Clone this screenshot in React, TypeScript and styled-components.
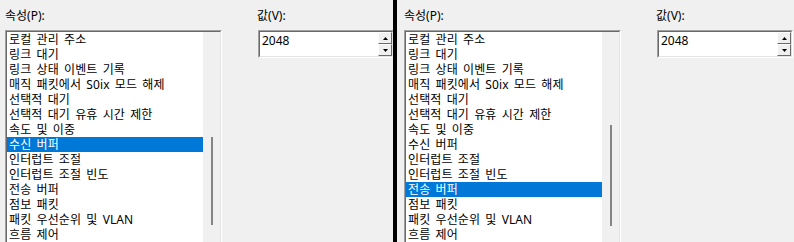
import React, { ReactElement } from 'react';
import styled, { createGlobalStyle } from 'styled-components';

const GlobalStyle = createGlobalStyle`
    html, body {
        margin: 0;
        padding: 0;
        background: #f0f0f0;
        overflow: hidden;
    }
    body {
        font-family: "Noto Sans", "Noto Sans CJK KR", sans-serif;
        font-size: 12px;
        color: #000;
    }
`;

const properties = [
    '로컬 관리 주소',
    '링크 대기',
    '링크 상태 이벤트 기록',
    '매직 패킷에서 S0ix 모드 해제',
    '선택적 대기',
    '선택적 대기 유휴 시간 제한',
    '속도 및 이중',
    '수신 버퍼',
    '인터럽트 조절',
    '인터럽트 조절 빈도',
    '전송 버퍼',
    '점보 패킷',
    '패킷 우선순위 및 VLAN',
    '흐름 제어',
];

const Page = styled.div`
    display: flex;
    width: 794px;
    height: 242px;
    overflow: hidden;
`;

const Divider = styled.div`
    width: 4px;
    flex-shrink: 0;
    background: #000;
`;

interface PanelProps {
    width: number;
    inset: number;
}

const Panel = styled.div<PanelProps>`
    flex-shrink: 0;
    width: ${({ width }) => width}px;
    height: 242px;
    overflow: hidden;
    display: grid;
    grid-template-columns: 217px 136px;
    grid-template-rows: 15px 1fr;
    column-gap: 36px;
    row-gap: 7px;
    padding: 8px 0 0 ${({ inset }) => inset}px;
    box-sizing: border-box;
    background: #f0f0f0;
`;

const Label = styled.div`
    line-height: 15px;
    white-space: nowrap;
`;

const ValueLabel = styled(Label)`
    margin-left: -1px;
`;

// classic sunken 3d border, two pixels deep
const Sunken = styled.div`
    border-style: solid;
    border-width: 1px;
    border-color: #a0a0a0 #fff #fff #a0a0a0;
    box-sizing: border-box;
`;

const SunkenInner = styled.div`
    border-style: solid;
    border-width: 1px;
    border-color: #696969 #e3e3e3 #e3e3e3 #696969;
    box-sizing: border-box;
    height: 100%;
`;

const ListBox = styled(Sunken)`
    height: 240px;
`;

const ListBody = styled(SunkenInner)`
    display: flex;
    background: #fff;
`;

const Items = styled.div`
    flex: 1;
    display: flex;
    flex-direction: column;
    overflow: hidden;
`;

interface ItemProps {
    selected: boolean;
}

const Item = styled.div<ItemProps>`
    height: 15px;
    line-height: 15px;
    padding-left: 2px;
    white-space: nowrap;
    word-spacing: 2px;
    letter-spacing: 0.1px;
    background: ${({ selected }) => (selected ? '#0078d7' : 'transparent')};
    color: ${({ selected }) => (selected ? '#fff' : '#000')};
`;

const Track = styled.div`
    width: 17px;
    flex-shrink: 0;
    display: flex;
    justify-content: center;
    background: #f0f0f0;
`;

const Thumb = styled.div`
    width: 2px;
    margin-left: 1px;
    background: #858585;
`;

const EditBox = styled(Sunken)`
    height: 28px;
    align-self: start;
`;

const EditBody = styled(SunkenInner)`
    display: flex;
    background: #fff;
`;

const EditText = styled.div`
    flex: 1;
    padding: 1px 0 0 2px;
    line-height: 15px;
`;

const Spin = styled.div`
    width: 14px;
    display: flex;
    flex-direction: column;
`;

const SpinButton = styled.div`
    flex: 1;
    display: flex;
    align-items: center;
    justify-content: center;
    background: #f0f0f0;
    border-style: solid;
    border-width: 1px;
    border-color: #fff #696969 #696969 #fff;
    box-sizing: border-box;
`;

const Arrow = ({ up }: { up: boolean }): ReactElement => (
    <svg width="5" height="3" viewBox="0 0 5 3">
        <polygon points={up ? '2.5,0 5,3 0,3' : '0,0 5,0 2.5,3'} fill="#000" />
    </svg>
);

interface PropertyPageProps {
    width: number;
    inset: number;
    selected: number;
    thumbTop: number;
    thumbHeight: number;
}

const PropertyPage = ({ width, inset, selected, thumbTop, thumbHeight }: PropertyPageProps): ReactElement => (
    <Panel width={width} inset={inset}>
        <Label>속성(P):</Label>
        <ValueLabel>값(V):</ValueLabel>
        <ListBox>
            <ListBody>
                <Items>
                    {properties.map((name, i) => (
                        <Item key={name} selected={i === selected}>
                            {name}
                        </Item>
                    ))}
                </Items>
                <Track>
                    <Thumb style={{ marginTop: thumbTop, height: thumbHeight }} />
                </Track>
            </ListBody>
        </ListBox>
        <EditBox>
            <EditBody>
                <EditText>2048</EditText>
                <Spin>
                    <SpinButton>
                        <Arrow up />
                    </SpinButton>
                    <SpinButton>
                        <Arrow up={false} />
                    </SpinButton>
                </Spin>
            </EditBody>
        </EditBox>
    </Panel>
);

export default (): ReactElement => (
    <>
        <GlobalStyle />
        <Page>
            <PropertyPage width={393} inset={5} selected={7} thumbTop={105} thumbHeight={88} />
            <Divider />
            <PropertyPage width={397} inset={7} selected={10} thumbTop={93} thumbHeight={101} />
        </Page>
    </>
);
